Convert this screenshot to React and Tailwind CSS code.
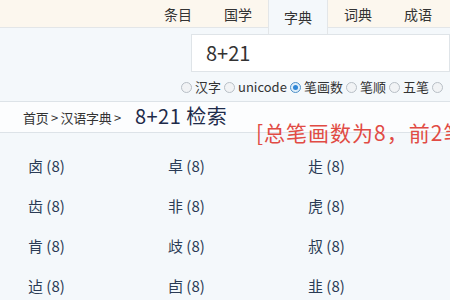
import React from "react";

const tabs = ["条目", "国学", "字典", "词典", "成语"];
const radios = [
	{ label: "汉字" },
	{ label: "unicode" },
	{ label: "笔画数", checked: true },
	{ label: "笔顺" },
	{ label: "五笔" },
];
const chars = [
	"卤", "卓", "歨", "",
	"齿", "非", "虎", "",
	"肯", "歧", "叔", "",
	"迠", "卣", "韭", "",
];

const font = {
	fontFamily: '"Microsoft YaHei", "Noto Sans CJK SC", "Noto Sans", sans-serif',
};

function Radio({ checked }) {
	return (
		<span
			className={
				"inline-block w-[11px] h-[11px] rounded-full border mr-[3px] relative top-[1px] " +
				(checked
					? "border-[#4d90c8] bg-[#dfeefa]"
					: "border-[#b8bfc6] bg-[#f1f3f5]")
			}
		>
			{checked && (
				<span className="absolute left-[2px] top-[2px] w-[5px] h-[5px] rounded-full bg-[#2f86d6]" />
			)}
		</span>
	);
}

export default function App() {
	return (
		<div
			className="w-[450px] h-[300px] overflow-hidden bg-[#f4f8fb] relative"
			style={font}
		>
			{/* top tabs */}
			<div className="h-[28px] bg-[#fcf7ee] border-b border-[#e3e6e8] flex pl-[148px]">
				{tabs.map((t) => (
					<div
						key={t}
						className={
							"w-[60px] flex items-center justify-center text-[14px] text-[#333] " +
							(t === "字典"
								? "bg-[#f4f8fb] h-[34px] border-x border-[#e3e6e8]"
								: "h-[28px]")
						}
					>
						{t}
					</div>
				))}
			</div>

			{/* search */}
			<div className="h-[73px] pt-[6px]">
				<div className="ml-[191px] h-[38px] bg-white border border-[#dfe4e8] flex items-center pl-[14px] text-[20px] text-[#333]">
					8+21
				</div>
				<div className="ml-[181px] mt-[5px] flex items-center text-[13px] text-[#333] whitespace-nowrap">
					{radios.map((r) => (
						<span key={r.label} className="flex items-center mr-[3px]">
							<Radio checked={r.checked} />
							{r.label}
						</span>
					))}
					<Radio />
				</div>
			</div>

			{/* breadcrumb */}
			<div className="h-[32px] bg-[#fcfdfe] border-y border-[#dde3e8] flex items-end pb-[3px] pl-[23px] whitespace-nowrap">
				<span className="text-[13px] text-[#333] mb-[2px] tracking-[-0.3px]">
					首页 &gt; 汉语字典 &gt;
				</span>
				<span className="text-[20px] text-[#1e2b4a] ml-[14px] leading-[26px] tracking-[0.5px]">
					8+21 检索
				</span>
			</div>
			<div className="absolute left-[256px] top-[118px] text-[21px] text-[#e14b44] whitespace-nowrap leading-[28px] tracking-[1px]">
				[总笔画数为8，前2笔为
			</div>

			{/* results */}
			<div className="grid grid-cols-[140px_140px_140px_140px] pl-[28px] pt-[22px]">
				{chars.map((c, i) => (
					<div key={i} className="h-[40px] text-[15px] text-[#2a3b55]">
						{c ? `${c} (8)` : ""}
					</div>
				))}
			</div>
		</div>
	);
}
